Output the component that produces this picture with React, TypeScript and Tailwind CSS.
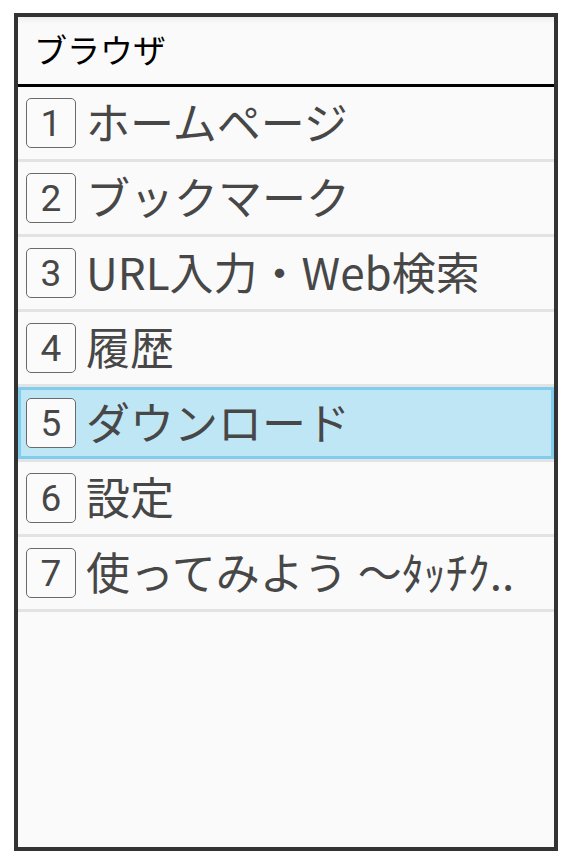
import React from "react";

type MenuItem = { num: number; label: string };

const items: MenuItem[] = [
  { num: 1, label: "ホームページ" },
  { num: 2, label: "ブックマーク" },
  { num: 3, label: "URL入力・Web検索" },
  { num: 4, label: "履歴" },
  { num: 5, label: "ダウンロード" },
  { num: 6, label: "設定" },
  { num: 7, label: "使ってみよう ～ﾀｯﾁｸ.." },
];

const selected = 5;

const Row: React.FC<MenuItem & { active: boolean }> = ({ num, label, active }) => (
  <li className="border-b-[3px] border-[#e3e3e3]">
    <div
      className={
        active
          ? "flex items-center h-[72px] pl-[8px] gap-[10px] bg-[#bfe6f5] shadow-[inset_0_0_0_3px_#80ceee]"
          : "flex items-center h-[72px] pl-[8px] gap-[10px]"
      }
    >
      <span className="flex items-center justify-center w-[50px] h-[50px] shrink-0 rounded-[5px] border border-[#6a6a6a] bg-[#fbfbfb] text-[37px] leading-none text-[#474747] font-['Roboto',sans-serif]">
        {num}
      </span>
      <span className="text-[44px] leading-none text-[#474747] whitespace-nowrap pb-[5px]">{label}</span>
    </div>
  </li>
);

export default function App() {
  return (
    <div className="min-h-[864px] bg-white pt-[13px] pl-[14px] font-['Noto_Sans_CJK_JP','Noto_Sans',sans-serif]">
      <div className="w-[544px] h-[838px] border-4 border-[#333] bg-[#fafafa] overflow-hidden">
        <header className="h-[70px] flex items-center pl-[16px] border-b-[3px] border-black bg-gradient-to-b from-[#eeeeee] via-[#fafafa] via-10% to-[#fafafa]">
          <h1 className="text-[33px] leading-none text-black pb-[2px]">ブラウザ</h1>
        </header>
        <ul>
          {items.map((it) => (
            <Row key={it.num} {...it} active={it.num === selected} />
          ))}
        </ul>
      </div>
    </div>
  );
}
